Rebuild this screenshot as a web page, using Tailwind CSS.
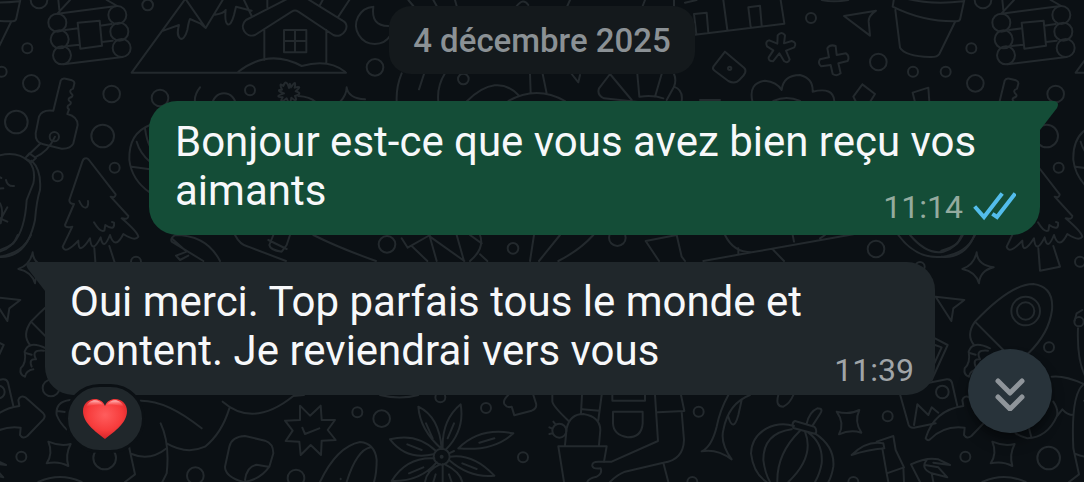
<!DOCTYPE html>
<html lang="fr">
<head>
  <meta charset="UTF-8">
  <meta name="viewport" content="width=device-width, initial-scale=1">
  <title>Discussion</title>
  <script src="https://cdn.jsdelivr.net/npm/@tailwindcss/browser@4"></script>
</head>
<body class="bg-[#0b1014] font-[Roboto,sans-serif] text-[#f7f8fa]">
  <main class="relative isolate min-h-screen overflow-hidden pt-[6px]">

    <!-- Chat wallpaper, one tile repeated sideways -->
    <svg class="absolute left-0 top-0 -z-10 h-[482px] w-full" viewBox="0 0 3252 1446" preserveAspectRatio="xMinYMin slice" fill="none" stroke="#23292d" stroke-width="6" stroke-linecap="round" stroke-linejoin="round" aria-hidden="true">
      <defs>
        <g id="tile">
          <!-- log cabin -->
          <circle cx="117" cy="0" r="25"/>
          <circle cx="172" cy="68" r="27"/><circle cx="179" cy="118" r="27"/><circle cx="186" cy="166" r="27"/>
          <circle cx="352" cy="45" r="27"/><circle cx="358" cy="95" r="27"/><circle cx="365" cy="144" r="27"/>
          <path d="M172 41L350 18M195 90L235 85M300 77L335 72M203 138L238 134M306 126L338 122M190 193L368 171M233 68L299 62L306 137L241 146ZM175 0L178 30M172 41L210 0M320 0L352 18"/>
          <!-- mountain and chalet -->
          <path d="M395 218L550 5Q556 -6 562 5L617 84L668 0M490 92L537 75C525 118 550 135 562 90Q566 65 570 57L600 70L617 84M645 44Q672 40 677 30C672 80 690 90 702 45Q706 28 708 20L755 32M732 0L755 48M395 218H1038"/>
          <path d="M865 -5L738 60C715 80 738 115 765 105L875 35Q885 28 895 35L1000 105C1030 118 1055 75 1028 62L920 -5M793 90V180M979 90V190M715 215Q805 145 905 198Q985 175 1035 215M802 0V22M968 0L960 15M1048 0L1015 50M852 90H919V157H852ZM885 90V157M852 123H919"/>
          <path d="M1120 20A56 56 0 1 0 1172 105M1120 20Q1112 78 1165 78"/>
          <circle cx="82" cy="145" r="15"/><circle cx="5" cy="215" r="15"/><circle cx="94" cy="250" r="25"/>
          <circle cx="335" cy="282" r="25"/><circle cx="480" cy="294" r="25"/><circle cx="443" cy="15" r="16"/>
          <circle cx="750" cy="271" r="15"/><circle cx="1125" cy="202" r="25"/><circle cx="672" cy="315" r="35"/>
          <path d="M600 262Q582 285 585 306M1040 262Q1045 295 1095 298M1040 262Q1040 285 1020 306M895 288Q930 290 947 306"/>
          <path d="M867 264Q858 235 850 258Q835 245 846 269Q825 270 852 280Q820 290 848 292Q835 315 860 295Q870 320 874 293Q895 310 885 288Q910 280 887 274Q910 255 884 263Q890 235 873 262Q868 240 867 264Z"/>
          <!-- key -->
          <path d="M160 332L182 242Q186 233 197 236L216 241Q226 245 222 255L219 266Q203 272 217 284Q220 290 208 294Q202 300 212 306Q215 312 204 317Q200 324 207 328L202 342Q233 350 233 375L220 430Q212 447 185 446L130 433Q105 428 107 400L117 350Q125 328 160 332"/>
          <circle cx="163" cy="410" r="14"/>
          <path d="M122 430L82 468M165 410Q145 455 105 472M88 460L108 474L95 486L75 475Z"/>
          <circle cx="49" cy="366" r="34"/><circle cx="308" cy="408" r="34"/><circle cx="173" cy="529" r="15"/><circle cx="344" cy="503" r="15"/>
          <!-- sleeping bean -->
          <path d="M-8 468Q50 450 88 485Q108 510 100 550L80 600Q75 690 40 730Q20 745 -8 752M95 482Q125 510 120 570Q110 600 105 660Q90 730 55 755Q25 775 -8 770M18 540Q22 560 42 558M-5 530L4 534M-5 566L10 565M-5 670L22 622M0 655L22 665M0 610Q12 630 2 670"/>
          <!-- fir -->
          <path d="M257 475Q250 475 247 485L208 600Q208 612 222 612L195 675Q195 685 217 680L188 740Q195 765 235 722Q235 770 270 715Q275 765 302 712Q310 755 330 705Q345 752 370 702Q405 725 415 710Q412 695 365 655Q385 660 385 648L332 590Q347 595 347 583L267 480Q262 474 257 475ZM238 603Q246 623 257 623Q266 620 264 603M282 667Q300 698 313 692L316 675Q345 695 342 668L336 666M283 745L288 812L348 800L328 738"/>
          <path d="M450 375Q385 400 388 480Q395 540 450 578M435 385Q440 420 450 440M410 425Q420 460 450 485M395 500L450 508"/>
          <path d="M98 757Q100 795 149 802Q108 812 105 850Q95 815 55 807Q90 795 98 757Z"/>
          <circle cx="408" cy="785" r="15"/>
          <path d="M-25 890L61 900L28 925L22 963Z"/>
          <!-- rocket -->
          <path d="M93 965Q200 852 268 852Q330 860 324 930Q315 1000 253 1060M93 965L178 1050M93 965Q65 1005 90 1035"/>
          <circle cx="245" cy="933" r="43"/><circle cx="245" cy="933" r="26"/>
          <path d="M138 1045Q85 1020 74 1055Q80 1090 62 1105Q58 1125 75 1130Q78 1112 100 1108M132 1052Q92 1048 108 1078Q85 1075 95 1100M74 1058L95 1064"/>
          <path d="M-27 1015L11 1035L-37 1140M-27 1035L-7 1042L-45 1125"/>
          <circle cx="315" cy="1042" r="15"/><circle cx="405" cy="965" r="14"/>
          <path d="M402 985Q398 1090 430 1140M392 962L398 940L415 930"/>
          <!-- photo -->
          <path d="M-132 1183L-106 1275Q-102 1285 -90 1283L-25 1270M-45 1148L8 1138Q20 1136 24 1148L40 1218M-90 1275L-80 1213L-47 1245L-37 1222L-17 1238"/>
          <circle cx="-5" cy="1176" r="19"/>
          <path d="M-55 1315Q-50 1324 -42 1318Q0 1275 62 1283L60 1305Q68 1318 82 1308L130 1258Q138 1248 130 1240L76 1192Q60 1185 55 1200L58 1218Q-30 1230 -55 1315Z"/>
          <circle cx="153" cy="1164" r="25"/><circle cx="64" cy="1370" r="15"/><circle cx="314" cy="1374" r="34"/>
          <path d="M145 1325Q180 1340 212 1332Q195 1365 205 1398Q175 1382 140 1390Q160 1360 145 1325Z"/>
          <path d="M210 1200Q165 1205 170 1245Q180 1270 200 1288M172 1233L195 1236M328 1205Q345 1230 338 1250Q310 1312 250 1315Q230 1310 215 1300M262 1312L255 1285M338 1250L355 1228Q370 1245 388 1245M323 1130Q360 1125 420 1152M420 1152Q380 1180 388 1345L405 1423L375 1446M395 1362Q450 1385 500 1345M115 1446Q180 1416 245 1446"/>
          <path d="M420 1202Q500 1200 605 1285M482 1270Q510 1330 500 1420L487 1446M500 1330Q560 1365 615 1340Q665 1300 688 1225M668 1205Q760 1285 880 1188L912 1185"/>
          <circle cx="586" cy="1427" r="25"/><circle cx="888" cy="1434" r="25"/><circle cx="1072" cy="1237" r="15"/><circle cx="1145" cy="1256" r="25"/>
          <path d="M735 1308L795 1322Q820 1330 820 1360L808 1400Q780 1440 730 1446Q675 1430 675 1400L688 1340Q695 1310 735 1308ZM735 1440Q740 1400 770 1394L805 1400"/>
          <path d="M900 1217L930 1247L962 1217L965 1260L1005 1260L983 1290L1007 1320L965 1322L963 1365L932 1335L902 1365L898 1325L857 1323L878 1292L855 1262L900 1260ZM907 1283L915 1302L958 1285"/>
          <path d="M960 1446Q1010 1340 1080 1326Q1125 1330 1130 1380Q1130 1420 1122 1446M1040 1446Q1070 1350 1112 1342M1022 1436V1438"/>
          <!-- flower -->
          <circle cx="1325" cy="1370" r="24"/><circle cx="1325" cy="1370" r="3"/>
          <path d="M1325 1347Q1260 1290 1255 1220Q1318 1250 1325 1347M1328 1347Q1325 1260 1382 1213Q1395 1290 1338 1348M1300 1363Q1220 1382 1170 1318Q1250 1297 1308 1353M1375 1345Q1440 1280 1540 1300Q1480 1355 1375 1345M1350 1370Q1420 1360 1483 1427Q1410 1435 1347 1380M1303 1375Q1220 1370 1175 1443Q1260 1445 1310 1387M1320 1393Q1280 1410 1275 1446M1328 1393V1446M1335 1393Q1380 1415 1387 1446M1300 1446L1307 1423M1355 1446L1347 1423M1278 1270L1298 1315M1362 1270L1343 1315M1222 1333L1265 1350M1438 1328L1483 1315M1387 1390L1430 1407M1227 1420L1270 1402M1347 1360L1362 1353"/>
          <circle cx="1321" cy="1192" r="15"/><circle cx="1458" cy="1224" r="15"/><circle cx="1569" cy="1372" r="15"/><circle cx="2096" cy="1235" r="15"/><circle cx="2077" cy="1446" r="15"/>
          <path d="M1140 1185Q1200 1200 1255 1185M1525 1185Q1508 1200 1513 1212Q1522 1225 1535 1220L1543 1246L1595 1232Q1612 1225 1608 1210L1600 1185"/>
          <!-- cactus and gardener -->
          <path d="M1657 1185V1205Q1660 1220 1705 1262M1746 1185L1743 1238M1805 1185L1795 1260M1747 1228L1798 1232M1695 1335L1700 1285Q1710 1242 1750 1242Q1800 1250 1801 1290L1797 1335M1692 1446L1675 1339H1820L1812 1385"/>
          <circle cx="1678" cy="1292" r="21"/>
          <path d="M1660 1265L1667 1274M1648 1282L1657 1286M1648 1302L1658 1300M1837 1185V1202H1935V1185M1839 1235H1928V1270Q1925 1312 1883 1312Q1840 1305 1839 1270Z"/>
          <path d="M1965 1185L1974 1323L1835 1385H1795Q1775 1385 1777 1398Q1780 1408 1802 1405Q1808 1420 1790 1430Q1765 1435 1762 1446M2043 1185L2053 1233L1973 1237M2045 1235L2052 1320Q2050 1380 1990 1388L1875 1415Q1850 1425 1830 1446M1990 1388L2005 1446"/>
          <path d="M2185 1185Q2160 1230 2150 1280Q2135 1340 2105 1354Q2150 1345 2195 1378Q2160 1330 2170 1290Q2185 1210 2250 1185M2185 1250Q2200 1300 2215 1245L2225 1200M2335 1185Q2325 1220 2350 1220Q2370 1210 2380 1185"/>
          <!-- pumpkin -->
          <path d="M2382 1278Q2340 1265 2300 1285Q2255 1310 2253 1360Q2260 1420 2300 1446M2375 1288Q2290 1300 2290 1380Q2295 1420 2310 1446M2400 1292Q2330 1360 2332 1446M2415 1295Q2445 1370 2365 1446M2425 1298Q2470 1330 2465 1390Q2460 1420 2445 1446M2445 1300Q2505 1340 2500 1400Q2495 1430 2485 1446M2385 1263L2443 1280Q2452 1288 2447 1302L2380 1284Q2374 1268 2385 1263ZM2420 1271Q2428 1235 2452 1225Q2472 1225 2460 1242L2438 1276"/>
          <path d="M2510 1235Q2550 1245 2578 1230Q2562 1265 2584 1298Q2550 1288 2517 1303Q2535 1270 2510 1235Z"/>
          <circle cx="2663" cy="1249" r="15"/><circle cx="2560" cy="1446" r="15"/>
          <path d="M2555 1365Q2600 1320 2650 1330L2653 1345Q2600 1350 2555 1365M2630 1325L2680 1308L2687 1350L2712 1402L2660 1420L2647 1345M2660 1420L2665 1446M2710 1402L2712 1446"/>
          <path d="M2733 1393Q2780 1370 2815 1378L2850 1395L2800 1388M2780 1380Q2760 1405 2795 1420L2842 1432L2815 1402L2775 1395M2733 1393L2760 1446M2795 1420L2800 1446"/>
          <!-- strip between the two messages -->
          <path d="M660 783Q620 705 525 705Q510 715 515 725L610 783M515 715L560 755L528 767L540 780L565 767M705 705Q720 735 745 740L858 783M820 705L808 735Q810 750 845 755L860 735L870 705M805 720L860 747M940 705Q1020 745 1128 783"/>
          <circle cx="1161" cy="733" r="25"/><circle cx="1539" cy="745" r="16"/>
          <path d="M1205 715L1223 743L1290 705M1235 738L1282 783M1288 705L1310 783M1290 710L1393 783M1370 705L1392 783M1440 705Q1455 745 1410 783M1410 705L1445 730M1440 763L1462 783M1602 705L1590 783"/>
          <path d="M1680 705L1617 783M1780 705Q1740 750 1675 783M1977 783L1937 723L2030 705L2045 770L2055 783M2175 705Q2200 757 2255 757L2110 783M2255 757L2560 703M2215 745V763M2378 705L2382 725M2460 715L2475 705M2320 750L2352 783"/>
          <circle cx="1852" cy="713" r="25"/><circle cx="2628" cy="747" r="25"/><circle cx="2760" cy="800" r="14"/>
          <path d="M2695 705Q2750 780 2830 770Q2900 760 2925 705M2730 705Q2780 765 2830 755Q2870 745 2885 705"/>
          <!-- around the date -->
          <path d="M1225 0L1240 18M1300 0L1310 18M1365 0L1370 18M1550 18Q1570 -8 1585 15M1710 0L1702 18M1935 0L1928 18M2022 0V18M1205 220Q1188 260 1190 306M1272 222L1257 268M1335 220Q1310 260 1315 306M1398 306Q1490 215 1558 288M1525 303Q1610 255 1695 303M1590 222L1592 278M1628 222L1640 280M1715 222L1735 247L1740 225M1830 222L1797 265Q1790 285 1812 295L1915 306M1830 222L1895 300M1912 222L1918 290M1985 222L1965 290M2022 222Q2030 240 2022 260L2000 300M2022 260Q2050 270 2045 303M1920 290Q1960 285 1990 295"/>
          <circle cx="1390" cy="237" r="16"/>
          <path d="M2055 8L2090 0M2085 104L2353 71M2170 0L2182 90M2342 0L2353 70M2082 42L2120 38L2125 98M2082 42L2089 102M2245 22L2280 17L2285 76M2245 22L2252 81M2465 0Q2500 8 2545 0"/>
          <circle cx="2433" cy="54" r="15"/><circle cx="2635" cy="186" r="25"/><circle cx="2739" cy="215" r="15"/>
          <path d="M2532 48L2628 32Q2605 48 2606 65L2610 107Z"/>
          <path d="M2333 106Q2345 92 2355 106L2352 130L2375 123Q2392 128 2383 142L2358 152L2369 178Q2364 192 2352 183L2338 160L2319 184Q2304 184 2306 172L2320 151L2301 139Q2294 124 2308 121L2332 131Z"/>
          <path d="M2175 155L2140 200Q2136 207 2145 213L2185 243Q2205 254 2220 238Q2245 215 2232 203Z"/><circle cx="2189" cy="205" r="5"/>
          <path d="M2482 145Q2490 132 2507 138L2510 165L2538 160Q2550 168 2543 183L2515 190L2522 220Q2510 230 2498 222L2492 195L2464 199Q2452 190 2460 178L2487 172Z"/>
          <path d="M2257 303Q2245 250 2295 242Q2330 245 2345 270Q2350 225 2400 225Q2440 235 2438 275Q2500 260 2503 303M2320 303Q2360 285 2400 303M2587 253L2625 282L2610 306M2587 253L2560 290L2568 306M2745 306L2738 278L2785 263L2788 306M2100 300H2160"/>
          <!-- flower pot -->
          <path d="M2682 -5L2678 20Q2770 66 2870 64Q2880 63 2881 55L2894 -5M2715 -5Q2790 15 2890 4M2686 30L2700 143Q2715 168 2790 171Q2812 172 2818 162L2865 66"/>
        </g>
      </defs>
      <use href="#tile" x="-2832"/>
      <use href="#tile"/>
      <use href="#tile" x="2832"/>
    </svg>

    <div class="flex flex-col gap-[27px]">
      <time datetime="2025-12-04" class="self-center rounded-[22px] bg-[#14191c] px-6 pt-[15px] pb-[13px] text-[33px] leading-10 font-medium text-[#8b9195]">4 décembre 2025</time>

      <!-- Sent message -->
      <article class="relative mr-11 ml-[149px] max-w-[891px] self-end rounded-[28px] rounded-tr-none bg-[#144d37] pt-4 pr-6 pb-2 pl-[26px] text-[42px] leading-[49px]">
        <svg class="absolute top-0 -right-[18px] h-8 w-[18px]" viewBox="0 0 18 32" fill="#144d37" aria-hidden="true"><path d="M0 0H14Q20 1 17 7L0 29Z"/></svg>
        <p class="inline">Bonjour est-ce que vous avez bien reçu vos aimants</p>
        <div class="float-right mt-[21px] flex items-center gap-[10px]">
          <time class="text-[32px] leading-10 text-[#94ab9f]">11:14</time>
          <svg class="h-8 w-[43px]" viewBox="0 0 43 32" fill="none" stroke="#53bdeb" stroke-width="4" stroke-linecap="square" role="img" aria-label="Lu"><path d="M3 17L11 26L28 4M21 24L24 26L41 4"/></svg>
        </div>
      </article>

      <!-- Received message -->
      <article class="relative mr-[149px] ml-[45px] w-full max-w-[890px] rounded-[28px] rounded-tl-none bg-[#20272b] pt-[15px] pr-[21px] pb-[5px] pl-[25px] text-[42px] leading-[49px]">
        <svg class="absolute top-0 -left-[19px] h-8 w-[19px]" viewBox="0 0 19 32" fill="#20272b" aria-hidden="true"><path d="M19 0H4Q-2 1 2 7L19 29Z"/></svg>
        <p class="inline">Oui merci. Top parfais tous le monde et content. Je reviendrai vers vous</p>
        <time class="float-right mt-6 text-[32px] leading-10 text-[#a0a5a8]">11:39</time>
        <button type="button" aria-label="Réaction cœur" class="absolute top-[122px] left-5 flex h-[69px] w-20 items-center justify-center rounded-full border-3 border-[#0b1014] bg-[#20272b]">
          <svg class="h-10 w-11" viewBox="0 0 44 40" aria-hidden="true">
            <defs>
              <radialGradient id="heart" cx=".5" cy=".4" r=".65">
                <stop offset="0" stop-color="#ff5d5d"/><stop offset=".6" stop-color="#f73c3c"/><stop offset="1" stop-color="#cf1f24"/>
              </radialGradient>
              <linearGradient id="shine" x1="0" y1="0" x2="0" y2="1">
                <stop offset="0" stop-color="#ffc1c1"/><stop offset="1" stop-color="#ff6060" stop-opacity="0"/>
              </linearGradient>
            </defs>
            <path fill="url(#heart)" d="M22 7C20 2 16 0 12 0C5 0 0 5 0 12C0 24 12 32 22 40C32 32 44 24 44 12C44 5 39 0 32 0C28 0 24 2 22 7Z"/>
            <path fill="url(#shine)" d="M3 8C6 0 16 -1 20 6C15 5 8 6 3 8ZM24 6C28 -1 38 0 41 8C36 6 29 5 24 6Z"/>
          </svg>
        </button>
      </article>
    </div>

    <button type="button" aria-label="Aller en bas" class="absolute top-[349px] right-8 flex size-21 items-center justify-center rounded-full bg-[#28333a] shadow-lg shadow-black/40">
      <svg class="h-10 w-8" viewBox="0 0 32 40" fill="none" stroke="#8f959a" stroke-width="5" stroke-linecap="round" stroke-linejoin="round" aria-hidden="true"><path d="M4 10L16 22L28 10M4 26L16 38L28 26"/></svg>
    </button>
  </main>
</body>
</html>
